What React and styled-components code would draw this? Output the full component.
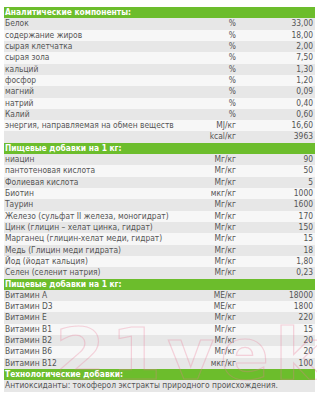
import React from 'react';
import styled, { createGlobalStyle } from 'styled-components';

const GlobalStyle = createGlobalStyle`
  body {
    margin: 0;
    background: #fff;
    font-family: "DejaVu Sans Condensed", "DejaVu Sans", sans-serif;
    font-stretch: condensed;
  }
`;

const sections = [
  {
    title: 'Аналитические компоненты:',
    rows: [
      ['Белок', '%', '33,00'],
      ['содержание жиров', '%', '18,00'],
      ['сырая клетчатка', '%', '2,00'],
      ['сырая зола', '%', '7,50'],
      ['кальций', '%', '1,30'],
      ['фосфор', '%', '1,20'],
      ['магний', '%', '0,09'],
      ['натрий', '%', '0,40'],
      ['Калий', '%', '0,60'],
      ['энергия, направляемая на обмен веществ', 'MJ/кг', '16,60'],
      ['', 'kcal/кг', '3963'],
    ],
  },
  {
    title: 'Пищевые добавки на 1 кг:',
    rows: [
      ['ниацин', 'Мг/кг', '90'],
      ['пантотеновая кислота', 'Мг/кг', '50'],
      ['Фолиевая кислота', 'Мг/кг', '5'],
      ['Биотин', 'мкг/кг', '1000'],
      ['Таурин', 'Мг/кг', '1600'],
      ['Железо (сульфат II железа, моногидрат)', 'Мг/кг', '170'],
      ['Цинк (глицин – хелат цинка, гидрат)', 'Мг/кг', '150'],
      ['Марганец (глицин-хелат меди, гидрат)', 'Мг/кг', '15'],
      ['Медь (Глицин меди гидрата)', 'Мг/кг', '18'],
      ['Йод (йодат кальция)', 'Мг/кг', '1,80'],
      ['Селен (селенит натрия)', 'Мг/кг', '0,23'],
    ],
  },
  {
    title: 'Пищевые добавки на 1 кг:',
    rows: [
      ['Витамин A', 'МЕ/кг', '18000'],
      ['Витамин D3', 'МЕ/кг', '1800'],
      ['Витамин E', 'Мг/кг', '220'],
      ['Витамин B1', 'Мг/кг', '15'],
      ['Витамин B2', 'Мг/кг', '20'],
      ['Витамин B6', 'Мг/кг', '20'],
      ['Витамин B12', 'мкг/кг', '100'],
    ],
  },
  {
    title: 'Технологические добавки:',
    note: 'Антиоксиданты: токоферол экстракты природного происхождения.',
  },
];

function App() {
  return (
    <Page>
      <GlobalStyle />
      <Table>
        {sections.map((s, i) => (
          <React.Fragment key={i}>
            <Header>{s.title}</Header>
            {s.rows && s.rows.map((r, j) => (
              <Row key={j} $dark={j % 2 === 0}>
                <Name>{r[0]}</Name>
                <Unit>{r[1]}</Unit>
                <Value>{r[2]}</Value>
              </Row>
            ))}
            {s.note && <Note $dark>{s.note}</Note>}
          </React.Fragment>
        ))}
      </Table>
      <Watermark>21vek.by</Watermark>
    </Page>
  );
}

export default App;

const Page = styled.div`
  position: relative;
  width: 317px;
  height: 400px;
  overflow: hidden;
  padding: 7px 2px 0 4px;
  box-sizing: border-box;
`;

const Table = styled.div`
  width: 311px;
  display: flex;
  flex-direction: column;
  font-size: 8.4px;
  color: #555;
`;

const Header = styled.div`
  height: 11.32px;
  line-height: 11.32px;
  background: #6cbd2c;
  color: #fff;
  font-weight: bold;
  padding-left: 1px;
  white-space: nowrap;
`;

const Row = styled.div`
  height: 11.32px;
  line-height: 11.32px;
  display: grid;
  grid-template-columns: 1fr 60px 77px;
  background: ${p => (p.$dark ? '#e7e7e7' : '#f7f7f7')};
  white-space: nowrap;
`;

const Name = styled.div`
  padding-left: 1px;
`;

const Unit = styled.div`
  text-align: right;
  padding-right: 2px;
`;

const Value = styled.div`
  text-align: right;
  padding-right: 2px;
`;

const Note = styled.div`
  height: 11.32px;
  line-height: 11.32px;
  padding-left: 1px;
  background: ${p => (p.$dark ? '#e7e7e7' : '#f7f7f7')};
  white-space: nowrap;
`;

const Watermark = styled.div`
  position: absolute;
  left: 55px;
  top: 312px;
  font-family: "DejaVu Sans", sans-serif;
  font-stretch: normal;
  font-size: 72px;
  font-weight: bold;
  color: transparent;
  -webkit-text-stroke: 1.2px rgba(235, 120, 150, 0.3);
  letter-spacing: 6px;
  white-space: nowrap;
  pointer-events: none;
`;
